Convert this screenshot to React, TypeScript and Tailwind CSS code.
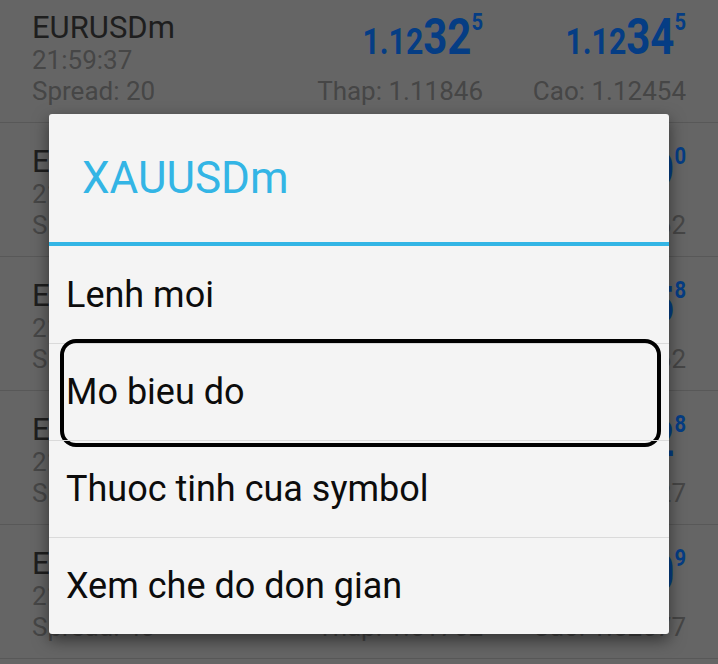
type Quote = {
  name: string;
  time: string;
  spread: string;
  bid: [string, string, string];
  ask: [string, string, string];
  low: string;
  high: string;
};

const quotes: Quote[] = [
  { name: 'EURUSDm', time: '21:59:37', spread: 'Spread: 20', bid: ['1.12', '32', '5'], ask: ['1.12', '34', '5'], low: 'Thap: 1.11846', high: 'Cao: 1.12454' },
  { name: 'EURGBPm', time: '21:59:36', spread: 'Spread: 25', bid: ['0.72', '86', '5'], ask: ['0.72', '89', '0'], low: 'Thap: 0.72541', high: 'Cao: 0.72962' },
  { name: 'EURJPYm', time: '21:59:37', spread: 'Spread: 30', bid: ['121.', '32', '8'], ask: ['121.', '35', '8'], low: 'Thap: 120.914', high: 'Cao: 121.862' },
  { name: 'EURCHFm', time: '21:59:35', spread: 'Spread: 30', bid: ['1.08', '19', '8'], ask: ['1.08', '22', '8'], low: 'Thap: 1.07988', high: 'Cao: 1.08427' },
  { name: 'EURAUDm', time: '21:59:37', spread: 'Spread: 40', bid: ['1.52', '36', '9'], ask: ['1.52', '40', '9'], low: 'Thap: 1.51762', high: 'Cao: 1.52677' },
];

const menu = ['Lenh moi', 'Mo bieu do', 'Thuoc tinh cua symbol', 'Xem che do don gian'];

function Price({ p }: { p: [string, string, string] }) {
  return (
    <div className="flex h-[50px] origin-right scale-x-[0.84] items-baseline justify-end font-bold text-[#053d84]">
      <span className="text-[36px] leading-none">{p[0]}</span>
      <span className="text-[50px] leading-none">{p[1]}</span>
      <span className="-mt-[2px] self-start text-[24px] leading-none">{p[2]}</span>
    </div>
  );
}

function QuoteRow({ q }: { q: Quote }) {
  return (
    <div className="flex h-[134px] border-b border-[#585858] pl-8 pr-8 pt-[23px]">
      <div className="flex-1">
        <div className="text-[31px] leading-[31px] text-[#1e1e1e]">{q.name}</div>
        <div className="mt-1 text-[26px] leading-[26px] text-[#464646]">{q.time}</div>
        <div className="mt-[5px] text-[26px] leading-[26px] text-[#464646]">{q.spread}</div>
      </div>
      {[
        { p: q.bid, t: q.low },
        { p: q.ask, t: q.high },
      ].map((c, i) => (
        <div key={i} className="w-[203px] text-right">
          <Price p={c.p} />
          <div className="mt-4 text-[26px] leading-[26px] text-[#464646]">{c.t}</div>
        </div>
      ))}
    </div>
  );
}

export default function App() {
  return (
    <div
      className="relative h-[664px] w-[718px] overflow-hidden bg-[#656565]"
      style={{ fontFamily: 'Roboto, "Open Sans", sans-serif' }}
    >
      <div className="-mt-[11px]">
        {quotes.map((q, i) => (
          <QuoteRow key={i} q={q} />
        ))}
      </div>

      {/* context dialog */}
      <div className="absolute left-[49px] top-[114px] w-[620px] rounded-[3px] bg-[#f4f4f4] shadow-[0_6px_16px_rgba(0,0,0,0.5)]">
        <div className="flex h-[128px] items-center pl-[33px] text-[44px] text-[#33b5e5]">XAUUSDm</div>
        <div className="h-[4px] bg-[#33b5e5]" />
        {menu.map((m, i) => (
          <div
            key={i}
            className={`relative flex h-[97px] items-center pl-[17px] text-[36px] text-[#0c0c0c] ${i > 0 ? 'border-t border-[#dadada]' : ''}`}
          >
            {m}
            {i === 1 && (
              <div className="absolute -top-[5px] left-[11px] h-[108px] w-[601px] rounded-[16px] border-4 border-black" />
            )}
          </div>
        ))}
      </div>
    </div>
  );
}
